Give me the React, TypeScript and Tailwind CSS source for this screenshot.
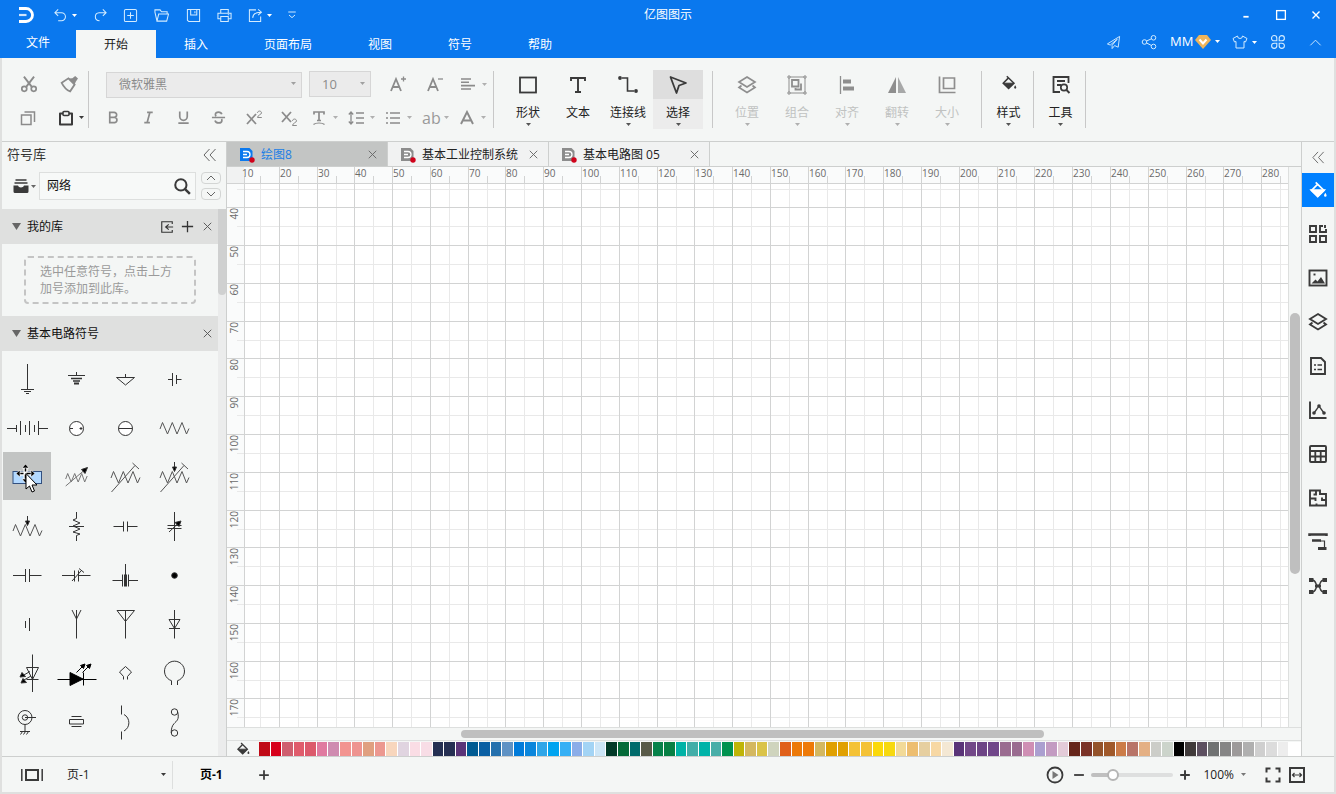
import { useEffect, useRef, useState, type ReactNode } from "react";

const MINOR = 19;
const STEP = 37.78;

const SWATCHES = [
  "#c00a16", "#d7001b", "#cf5f6f", "#e05c6c", "#dc5a6c", "#e07aa0", "#cf8bb0", "#f29490", "#ee9490", "#e0a080",
  "#ec9890", "#f8d6bd", "#e0d4e0", "#fadde5", "#f8dde6", "#252f52", "#252f52", "#5a3478", "#005a92", "#0a5fa3",
  "#2470ad", "#5f92c4", "#007bda", "#0a86dc", "#2fa6e8", "#00a4f0", "#36b0f5", "#8bade8", "#a3d4f5", "#cde6f7",
  "#023a28", "#046a38", "#006b6b", "#585a48", "#07824a", "#078044", "#00b3a6", "#42aea8", "#00b3a8", "#48aea8",
  "#00924f", "#bfb508", "#d4b860", "#dac348", "#cfd4bd", "#e0601a", "#ec7908", "#ee7a08", "#d4b860", "#e0a000",
  "#e0a000", "#f4c236", "#f4c236", "#fbd90a", "#f7d90f", "#f2da98", "#edbe70", "#e6cfa0", "#f7d8a4", "#f4e8d4",
  "#5a3478", "#724888", "#6d4485", "#704689", "#9a6c90", "#9a6c90", "#cf8fb4", "#ab9fd0", "#c39bc2", "#e3cbd8",
  "#65251a", "#7a3226", "#94532a", "#a0592a", "#cc7c48", "#b87468", "#e4b084", "#cccdc8", "#ccd4cb", "#000000",
  "#403a3a", "#5d5060", "#707272", "#858585", "#9d9a9a", "#b0b0b0", "#cfcfcf", "#dcdcdc", "#ededed", "#ffffff",
];

type IconProps = { size?: number; box?: number; sw?: number; className?: string; children: ReactNode };

function Icon({ size = 16, box = 16, sw = 1, className = "", children }: IconProps) {
  return (
    <svg
      width={size}
      height={size}
      viewBox={`0 0 ${box} ${box}`}
      fill="none"
      stroke="currentColor"
      strokeWidth={sw}
      className={`shrink-0 ${className}`}
      aria-hidden="true"
    >
      {children}
    </svg>
  );
}

function Caret({ className = "" }: { className?: string }) {
  return (
    <svg width="5" height="3" viewBox="0 0 5 3" fill="currentColor" className={`shrink-0 ${className}`} aria-hidden="true">
      <path d="M0 0h5L2.5 3z" />
    </svg>
  );
}

/* ---------- shared glyphs ---------- */

const bucket = (
  <>
    <path d="M5.8 1.2 13 8.2 7.6 13.4 2.2 8.2 7 3.4" strokeWidth="1.5" />
    <path d="M2.6 8.2h10L7.6 13.2z" fill="currentColor" />
    <path d="M14.2 10.2c.8 1.2 1.1 1.8 1.1 2.4a1.1 1.1 0 0 1-2.2 0c0-.6.3-1.2 1.1-2.4z" fill="currentColor" stroke="none" />
  </>
);
const layers = "m10 2 8 5-8 5-8-5zM4.500 10.500 2 12.500l8 5 8-5-2.500-2";
const chevronsLeft = <path d="M7.500 2 2 8l5.500 6M13.500 2 8 8l5.500 6" />;
const cross = <path d="m4 4 8 8M12 4l-8 8" />;

/* ---------- title bar ---------- */

const quickActions: { label: string; width: string; caret?: boolean; icon: ReactNode }[] = [
  { label: "撤销", width: "w-[40px]", caret: true, icon: <path d="M5.500 1.500 2 5l3.500 3.500M2 5h7a4.300 4.300 0 0 1 0 8.600H5.500" /> },
  { label: "重做", width: "w-[30px]", icon: <path d="m10.500 1.500 3.500 3.500-3.500 3.500M14 5H6.500a4.300 4.300 0 0 0-4 4.300c0 2.500 1.800 4.200 4.500 4.300" /> },
  { label: "新建", width: "w-[31px]", icon: <><rect x="1.500" y="1.500" width="13" height="13" rx="1.500" /><path d="M8 4.500v7M4.500 8h7" /></> },
  { label: "打开", width: "w-[32px]", icon: <path d="M3.200 14 1 4.500v-2.500h5.500L8 4h6v2.500M3.200 14h10.300l2-7.500H5z" /> },
  { label: "保存", width: "w-[31px]", icon: <><path d="M1.500 1.500h13v13H3l-1.500-1.500z" /><path d="M5 1.500v6h6.500v-6M9.500 3.500v2" /></> },
  { label: "打印", width: "w-[31px]", icon: <><path d="M4 5.500v-4h8v4M4 11.500H1v-6h14v6h-3" /><path d="M4 9h8v5.500H4zM11.500 7.300h1.500" /></> },
  { label: "导出", width: "w-[38px]", caret: true, icon: <><path d="M8.500 2H1.500v12.500h12V9" /><path d="M5 10.500c.3-4 3-6 8.500-6M10.800 1.500l3.500 3-3.500 3.200" /></> },
];

const menuTabs = ["开始", "插入", "页面布局", "视图", "符号", "帮助"];

function Header() {
  const [active, setActive] = useState("开始");
  return (
    <header className="bg-[#0a78ee] text-white">
      <div className="grid grid-cols-[1fr_auto_1fr] h-[30px] items-center">
        <div className="flex items-center pl-[18px]">
          <svg width="16" height="16" viewBox="0 0 16 16" fill="none" stroke="white" className="mr-[19px] shrink-0" aria-hidden="true">
            <path d="M1 1.500h7a6.500 6.500 0 0 1 0 13H1" strokeWidth="2.800" />
            <path d="M1 8h7.500" strokeWidth="2.200" opacity=".8" />
          </svg>
          {quickActions.map((a) => (
            <button key={a.label} aria-label={a.label} className={`flex items-center gap-1 shrink-0 text-[#d4ecff] ${a.width}`}>
              <Icon size={15} sw={1.1}>{a.icon}</Icon>
              {a.caret && <Caret className="text-white" />}
            </button>
          ))}
          <button aria-label="更多" className="text-[#d4ecff]">
            <Icon size={12} sw={1.3}><path d="M3 4h10M4 8l4 3.500L12 8" /></Icon>
          </button>
        </div>
        <h1 className="text-xs">亿图图示</h1>
        <div className="flex justify-end pr-[3px]">
          <button aria-label="最小化" className="w-[35px] flex justify-center"><Icon size={14} sw={2}><path d="M5 10h6" /></Icon></button>
          <button aria-label="最大化" className="w-[35px] flex justify-center"><Icon size={14} sw={1.5}><rect x="3" y="3" width="10" height="10" /></Icon></button>
          <button aria-label="关闭" className="w-[35px] flex justify-center"><Icon size={14} sw={1.6}>{cross}</Icon></button>
        </div>
      </div>
      <div className="flex h-[28px] text-xs">
        <button className="w-[76px] pb-[2px]">文件</button>
        <nav className="flex">
          {menuTabs.map((t) => (
            <button
              key={t}
              onClick={() => setActive(t)}
              className={t === active ? "px-7 pt-[2px] bg-[#f4f6f5] text-[#222]" : "px-7 pt-[2px]"}
            >
              {t}
            </button>
          ))}
        </nav>
        <div className="ml-auto flex items-center pb-1 pr-[3px] text-[#d4ecff]">
          <button aria-label="发送" className="w-[35px] flex justify-center">
            <Icon size={15}><path d="M1.500 9.500 14.500 1.500l-1.500 11.500-4-1.800M1.500 9.500l3 1.200L12 4.500 6.500 11v3.500l2.500-3" /></Icon>
          </button>
          <button aria-label="分享" className="w-[35px] flex justify-center">
            <Icon size={16}>
              <circle cx="3.500" cy="8" r="2.300" /><circle cx="12.500" cy="3.800" r="2.300" /><circle cx="12.500" cy="12.500" r="2.300" />
              <path d="m5.600 7 4.800-2.200M5.600 9l4.900 2.500" />
            </Icon>
          </button>
          <button className="w-[60px] flex items-center pl-1 text-white text-[13px]">
            MM
            <svg width="16" height="14" viewBox="0 0 16 14" className="ml-[2px] shrink-0" aria-hidden="true">
              <path d="M4 0h8l4 5-8 9-8-9z" fill="#eeb55c" />
              <path d="m4.500 4.500 3.500 4 3.500-4" stroke="#fff" strokeWidth="2" fill="none" />
            </svg>
            <Caret className="ml-1" />
          </button>
          <button aria-label="主题" className="w-[31px] flex items-center justify-end gap-1">
            <Icon size={16}><path d="M5.500 2 1 4.500l1.500 3.500L4 7.500v6.500h8V7.500l1.500.5L15 4.500 10.500 2a2.500 2.500 0 0 1-5 0z" /></Icon>
            <Caret className="text-white" />
          </button>
          <button aria-label="应用" className="w-[41px] flex justify-center">
            <Icon size={16} sw={1.100}>
              <path d="M1.500 4.200A2.600 2.600 0 1 1 6.800 4.200V6.800H4.200A2.600 2.600 0 0 1 1.500 4.200zM9.200 6.800V4.200a2.600 2.600 0 1 1 2.600 2.600zM6.800 9.200v2.600a2.600 2.600 0 1 1-2.600-2.600zM9.200 9.200h2.600a2.600 2.600 0 1 1-2.600 2.600z" />
            </Icon>
          </button>
          <button aria-label="收起功能区" className="w-[35px] flex justify-center"><Icon size={15}><path d="m2.500 11 5.500-5.500L13.500 11" /></Icon></button>
        </div>
      </div>
    </header>
  );
}

/* ---------- ribbon ---------- */

function Divider() {
  return <div className="w-px h-[57px] bg-[#c8c8c8]" />;
}

const textButtons: { label: string; icon: ReactNode }[] = [
  { label: "加粗", icon: <path d="M4 2.500h4.700a2.600 2.600 0 0 1 0 5.300H4zM4 7.800h5.300a2.900 2.900 0 0 1 0 5.700H4z" /> },
  { label: "斜体", icon: <path d="M6.500 2.500h6M3.500 13.500h6M9.500 2.500l-3 11" /> },
  { label: "下划线", icon: <path d="M4 1.500v5.500a4 4 0 0 0 8 0V1.500M2.500 14h11" /> },
  { label: "删除线", icon: <path d="M11.500 4.500C11 2.800 9.700 2.200 8 2.200c-2 0-3.300 1-3.300 2.500 0 .8.300 1.400.9 1.800M1 8h14M4.300 11.200c.4 1.800 1.900 2.600 3.800 2.600 2.200 0 3.500-1 3.500-2.700 0-.6-.1-1-.4-1.400" /> },
];

const dropButtons: { label: string; icon: ReactNode }[] = [
  { label: "字符间距", icon: <><path d="M3 4.500V2h10v2.500M8 2v8.500M6 10.500h4" /><path d="M2.500 14.500c2-2 9-2 11 0" strokeWidth="1.200" /></> },
  { label: "行距", icon: <><path d="M8 3h8M8 8h8M8 13h8" /><path d="M3 2v12M.8 4.500 3 2l2.200 2.500M.8 11.500 3 14l2.200-2.500" strokeWidth="1.300" /></> },
  { label: "列表", icon: <path d="M1 3h2M1 8h2M1 13h2M5 3h10M5 8h10M5 13h10" /> },
];

const bigTools: { label: string; caret: boolean; icon: ReactNode }[] = [
  { label: "形状", caret: true, icon: <rect x="2" y="2.500" width="16" height="15" strokeWidth="1.800" /> },
  { label: "文本", caret: false, icon: <path d="M3 6V3h14v3M10 3v14M7 17h6" strokeWidth="1.900" /> },
  { label: "连接线", caret: true, icon: <><path d="M4 3h5.500v13H16" strokeWidth="1.600" /><circle cx="2" cy="3" r="1.900" fill="currentColor" stroke="none" /><circle cx="18" cy="16" r="1.900" fill="currentColor" stroke="none" /></> },
  { label: "选择", caret: true, icon: <path d="m2.500 2 15.500 6-7 2.500L8.500 18z" strokeWidth="1.800" strokeLinejoin="round" /> },
];

const arrangeTools: { label: string; icon: ReactNode }[] = [
  { label: "位置", icon: <path d={layers} strokeWidth="1.700" /> },
  {
    label: "组合",
    icon: (
      <>
        <rect x="2" y="2" width="16" height="16" strokeWidth="1" />
        <path d="M1 1h2v2H1zM17 1h2v2h-2zM1 17h2v2H1zM17 17h2v2h-2z" fill="#f4f6f5" strokeWidth="1" />
        <path d="M5 5h6.500v6.500H5zM14 8.500v6H8.500V13" strokeWidth="1.800" />
      </>
    ),
  },
  { label: "对齐", icon: <><path d="M3.500 1v18" strokeWidth="1.300" /><path d="M6 4.500h8v4H6zM6 11.500h11v4H6z" fill="currentColor" stroke="none" /></> },
  { label: "翻转", icon: <><path d="M9 2v16H1z" fill="currentColor" stroke="none" /><path d="M11 2v16h8z" fill="currentColor" stroke="none" opacity=".75" /></> },
  { label: "大小", icon: <path d="M2.500 1.500v16h16M6.500 3h11v10.500h-11z" strokeWidth="1.700" /> },
];

function BigTool({ label, icon, caret, active, disabled }: { label: string; icon: ReactNode; caret: boolean; active?: boolean; disabled?: boolean }) {
  return (
    <button disabled={disabled} className={`w-[50px] h-[59px] flex flex-col items-center ${active ? "bg-[#ececec]" : ""}`}>
      <span className={`w-full h-[29px] flex items-center justify-center ${active ? "bg-[#dedede]" : ""} ${disabled ? "text-[#8e8e8e]" : "text-[#3a3a3a]"}`}>
        <Icon size={20} box={20}>{icon}</Icon>
      </span>
      <span className={`text-xs pt-1 leading-5 ${disabled ? "text-[#c0c2c1]" : "text-[#222]"}`}>{label}</span>
      {caret && <Caret className={disabled ? "text-[#b0b0b0]" : "text-[#555]"} />}
    </button>
  );
}

function Ribbon() {
  return (
    <section aria-label="开始" className="flex items-center h-[84px] border-b border-[#cdcfce] text-[#8b8b8b]">
      <div className="grid grid-cols-[46px_40px] grid-rows-2 h-[70px] pt-[2px] items-center">
        <button aria-label="剪切" className="pl-[18px]">
          <Icon size={18}>
            <path d="m3.500 1.500 7 9M12.500 1.500l-7 9" strokeWidth="1.700" />
            <circle cx="3.800" cy="12.300" r="2.200" strokeWidth="1.500" /><circle cx="12.200" cy="12.300" r="2.200" strokeWidth="1.500" />
          </Icon>
        </button>
        <button aria-label="格式刷" className="pl-[12px]">
          <Icon size={18}>
            <path d="M7.500 3 13 8.500 9 14.500C6 13.500 3.500 11 1.500 7z" strokeWidth="1.600" />
            <path d="m7.500 3 5.500 5.500 1-2.500L16 3 13.500.8 11 2.800z" fill="currentColor" stroke="none" />
          </Icon>
        </button>
        <button aria-label="复制" className="pl-[18px]">
          <Icon size={16}><path d="M1.500 5h9.500v9.500H1.500zM4.500 2h10v10" strokeWidth="1.500" /></Icon>
        </button>
        <button aria-label="粘贴" className="pl-[10px] flex items-center gap-[5px] text-[#3a3a3a]">
          <Icon size={16}><path d="M2 3.500h12v11H2z" strokeWidth="2" strokeLinejoin="round" /><rect x="5" y="1.500" width="6" height="4" rx="1" fill="#f4f6f5" strokeWidth="1.600" /></Icon>
          <Caret />
        </button>
      </div>
      <Divider />
      <div className="flex flex-col justify-center gap-[7px] w-[404px] pl-[7px] pt-[2px]">
        <div className="flex items-center">
          <div className="relative ml-[10px]">
            <select aria-label="字体" className="appearance-none w-[196px] h-[26px] border border-[#d6d6d6] bg-[#ebebeb] text-xs pl-3 text-[#8b8b8b]">
              <option>微软雅黑</option>
            </select>
            <Caret className="absolute right-[6px] top-[11px] text-[#a0a0a0]" />
          </div>
          <div className="relative ml-[7px]">
            <select aria-label="字号" className="appearance-none w-[62px] h-[26px] border border-[#d6d6d6] bg-[#ebebeb] text-[13px] pl-3 text-[#8b8b8b]">
              <option>10</option>
            </select>
            <Caret className="absolute right-[6px] top-[11px] text-[#a0a0a0]" />
          </div>
          <button aria-label="增大字号" className="w-[36px] ml-[9px] flex justify-center">
            <Icon size={18} box={18} sw={1.800}><path d="m2 16 5-12 5 12M3.800 12h6.400" /><path d="M12 4h5M14.500 1.500v5" strokeWidth="1.300" /></Icon>
          </button>
          <button aria-label="减小字号" className="w-[37px] flex justify-center">
            <Icon size={18} box={18} sw={1.800}><path d="m2 16 5-12 5 12M3.800 12h6.400" /><path d="M12 4h5" strokeWidth="1.300" /></Icon>
          </button>
          <button aria-label="段落对齐" className="w-[37px] ml-[3px] pl-1 flex items-center gap-[6px]">
            <Icon size={16} sw={1.600}><path d="M1 3h10M1 6.300h8M1 9.600h14M1 13h10" /></Icon>
            <Caret className="text-[#b0b0b0]" />
          </button>
        </div>
        <div className="flex items-center h-[26px]">
          {textButtons.map((b) => (
            <button key={b.label} aria-label={b.label} className="w-[35px] flex justify-center">
              <Icon size={15} sw={1.800}>{b.icon}</Icon>
            </button>
          ))}
          <button aria-label="上标" className="w-[35px] flex justify-center">
            <Icon size={18} box={18} sw={1.800}><path d="m2 5 9 10M11 5 2 15" /><path d="M12.500 4c0-2.600 4-2.600 4 0 0 1.500-4 2.200-4 4.500h4.300" strokeWidth="1" /></Icon>
          </button>
          <button aria-label="下标" className="w-[36px] flex justify-center">
            <Icon size={18} box={18} sw={1.800}><path d="m2 3 9 10M11 3 2 13" /><path d="M12.500 12c0-2.600 4-2.600 4 0 0 1.500-4 2.200-4 4.500h4.300" strokeWidth="1" /></Icon>
          </button>
          {dropButtons.map((b) => (
            <button key={b.label} aria-label={b.label} className="w-[37px] pl-1 flex items-center gap-[6px]">
              <Icon size={16} sw={1.700}>{b.icon}</Icon>
              <Caret className="text-[#b0b0b0]" />
            </button>
          ))}
          <button className="w-[37px] pl-[4px] flex items-center gap-[3px] text-base leading-5 text-[#9a9a9a]">
            ab
            <Caret className="text-[#b0b0b0]" />
          </button>
          <button aria-label="字体颜色" className="w-[37px] pl-1 flex items-center gap-[6px]">
            <Icon size={16} sw={1.900}><path d="M2 14 8 2l6 12M4.500 10.500h7" /></Icon>
            <Caret className="text-[#b0b0b0]" />
          </button>
        </div>
      </div>
      <Divider />
      <div className="flex px-[9px]">
        {bigTools.map((t) => (
          <BigTool key={t.label} {...t} active={t.label === "选择"} />
        ))}
      </div>
      <Divider />
      <div className="flex px-[9px]">
        {arrangeTools.map((t) => (
          <BigTool key={t.label} {...t} caret disabled />
        ))}
      </div>
      <Divider />
      <div className="flex w-[51px] pl-[2px]">
        <BigTool label="样式" caret icon={<g transform="translate(2 0)">{bucket}</g>} />
      </div>
      <Divider />
      <div className="flex w-[51px] pl-[2px]">
        <BigTool
          label="工具"
          caret
          icon={<><path d="M17.500 8V2h-15v15H9M6 6h8M6 10h4" strokeWidth="1.800" /><circle cx="13" cy="12.500" r="3.200" strokeWidth="1.700" /><path d="m15.500 15 3 3" strokeWidth="2" /></>}
        />
      </div>
      <Divider />
    </section>
  );
}

/* ---------- symbol library ---------- */

const zigzag = "M10 26l2.500-6.500 5 11.500 4.800-11.500L27 31l5-11.500L36.500 31l2.500-5.500";

const symbols: { name: string; art: ReactNode }[] = [
  { name: "接地", art: <path d="M24.500 10v25M18 35.500h13M21 37.500h7M23 39.500h3" /> },
  { name: "接地2", art: <><path d="M24.500 18v3M16 21.500h17" /><path d="M19 24.500h11" strokeWidth="1.500" /><path d="M21 27h7" strokeWidth="1.500" /><path d="M22 29.500h5" strokeWidth="2" /></> },
  { name: "信号地", art: <path d="M24.500 20v3.500M15.500 23.500h18l-9 7.500z" /> },
  { name: "电池", art: <path d="M18 25.500h4.500M22.500 19v13M26.500 21v9M26.500 25.500h5" /> },
  { name: "电池组", art: <><path d="M4 25.500h9M17.500 18v14M26.500 18v14M35.500 18v14M35.500 25.500H45" /><path d="M13.500 22v7M22.500 22v7M31.500 22v7" /></> },
  { name: "直流源", art: <><circle cx="24.500" cy="25.500" r="7" fill="#fff" /><path d="M18 25.500h3M27.500 25.500h3M29 24v3" /></> },
  { name: "理想源", art: <><circle cx="24.500" cy="25.500" r="7" fill="#fff" /><path d="M17.500 25.500h14" /></> },
  { name: "电阻", art: <path d={zigzag} stroke="#555" /> },
  {
    name: "电阻器",
    art: (
      <>
        <rect x="10" y="19.500" width="28.500" height="12" fill="#b3d9ff" stroke="#33507f" />
        <path d="M22.500 14v14M15 21.500h15" stroke="#fff" strokeWidth="4" />
        <path d="M22.500 14v14M15 21.500h15" stroke="#000" strokeWidth="1.500" strokeDasharray="5.500 3 5.500" />
        <path d="m22.500 12 3.500 4h-7zM13 21.500l4-3.500v7zM32 21.500l-4-3.500v7zM22.500 31l3.500-4h-7z" fill="#000" stroke="#fff" strokeWidth=".6" />
        <path d="M23 21.500V37l3.500-3 2.500 6 2.500-1-2.500-6h5z" fill="#fff" stroke="#000" />
      </>
    ),
  },
  { name: "可变电阻", art: <><path d="M13.700 27l2-5.500 3.500 8.500 3.500-8.500 3.500 8.500 3.500-8.500 3 8.500 2.500-6M13.700 34 32 18.500" stroke="#777" /><path d="m35.500 15.500-6 2 3.500 4z" fill="#000" /></> },
  { name: "预调电阻", art: <path d={`${zigzag}M10.500 40 34 13.500M31.500 11l6.500 6`} stroke="#555" /> },
  { name: "可调电阻", art: <><path d={`${zigzag}M10.500 40 34 13.500M31.500 11l6.500 6`} stroke="#555" /><path d="M24.500 10v8" /><path d="m24.500 19.500-2-4.500h4z" fill="#000" /></> },
  { name: "电位器", art: <><g transform="translate(0 4)" stroke="#555"><path d={zigzag} /></g><path d="M24.500 15v8" /><path d="m24.500 24.500-2-4.500h4z" fill="#000" /></> },
  { name: "衰减器", art: <path d="M24.500 11v6.500l-3.500 1.500 7 3-7 3 7 3-7 3 7 2-3.500 1.500V40M17 25.500h15" /> },
  { name: "电容", art: <path d="M12.500 25.500h10M22.500 20.500v10M26.500 20.500v10M26.500 25.500h10" /> },
  { name: "可变电容", art: <><path d="M24.500 11v29M17.500 24.500h14M17.500 27.500h14M19 31l9-8.500" /><path d="m31 20-6 1.500 4 4z" fill="#000" /></> },
  { name: "电容2", art: <path d="M10 25.500h12.500M22.500 19v13M26.500 19v13M26.500 25.500h12" /> },
  { name: "微调电容", art: <path d="M10 25.500h12.500M22.500 20.500v11M26.500 20.500v11M26.500 25.500h12M20 31l9-10M27 18.500l5 4" /> },
  { name: "穿心电容", art: <><path d="M24.500 14v11M11.500 30.500h10M21.500 24.500v12M27.500 24.500v12M27.500 30.500H37" /><path d="M24.500 24.500v12" strokeWidth="3" /></> },
  { name: "节点", art: <circle cx="24.500" cy="25.500" r="2.800" fill="#000" /> },
  { name: "单元", art: <path d="M22.500 22v7M26.500 19v13" /> },
  { name: "天线", art: <path d="M24.500 11v28.500M20 11l4.500 9 4.500-9" /> },
  { name: "天线2", art: <path d="M24.500 11.500v28M16 11.500h17.500l-9 11z" /> },
  { name: "二极管", art: <path d="M24.500 11v28.500M19 20.500h11l-5.500 9zM19 29.500h11" /> },
  { name: "光电二极管", art: <><path d="M29.500 6.500v37.500M23.500 19.500h12l-6 12zM23.500 31.500h12M27 23.500l-7 4M28 28l-7 4" /><path d="m17 29 2-4.500 3.500 4zM18 35l2-4.500 3.500 4z" fill="#000" /></> },
  { name: "发光二极管", art: <g stroke="#000"><path d="M5.500 31.500H44.500M24.500 24.500l7-7M30.500 24.500l7-7M31.500 24.500v13" /><path d="M18 24.500v13l13-6.500z" fill="#000" /><path d="m33 16-4.500 1.500 3 3zM39 16l-4.500 1.500 3 3z" fill="#000" /></g> },
  { name: "灯", art: <path d="M22.500 31.500v-3l-4-4.500 6-5.500 6 5.500-4 4.500v3" /> },
  { name: "环形", art: <path d="M21.500 37v-4.300a10 10 0 1 1 6 0V37" /> },
  { name: "同轴", art: <><circle cx="22" cy="20.500" r="7" /><circle cx="22" cy="20.500" r="2.700" /><path d="M22 20.500h11M22 27.500v7M17 34.500h10M19.500 34.500l-2 3M22.500 34.500l-2 3M25.500 34.500l-2 3" /></> },
  { name: "晶体", art: <path d="M17.500 22.500h14v4.500h-14zM19.500 19.500h10M19.500 29.500h10" /> },
  { name: "断路器", art: <path d="M20.500 8.500v9M23 17.500c6.500 3.500 6.500 13 0 16.500M20.500 34.500v8" /> },
  { name: "熔断器", art: <><circle cx="24.500" cy="15" r="3.200" /><circle cx="24.500" cy="36" r="3.200" /><path d="M27.700 15c2 8-1.500 9-3.500 11.500-2 2-3 5-3 9.500" /></> },
];

function SectionHeader({ title, children }: { title: string; children?: ReactNode }) {
  return (
    <div className="flex items-center h-[35px] bg-[#dfe0df] pl-[10px] pr-[2px] text-[#555]">
      <svg width="9" height="7" viewBox="0 0 9 7" fill="#666" aria-hidden="true"><path d="M0 0h9L4.500 7z" /></svg>
      <h3 className="ml-[6px] mr-auto text-xs text-[#111]">{title}</h3>
      {children}
      <button aria-label={`关闭${title}`} className="w-4"><Icon size={15}>{cross}</Icon></button>
    </div>
  );
}

function Library() {
  const [query, setQuery] = useState("网络");
  const [selected, setSelected] = useState("电阻器");
  return (
    <aside className="w-[225px] shrink-0 flex flex-col border-r border-[#cdcfce]">
      <div className="flex items-center justify-between h-[25px] pl-[5px] pr-[8px]">
        <h2 className="text-[13px] text-[#333]">符号库</h2>
        <button aria-label="收起" className="text-[#666]"><Icon size={16}>{chevronsLeft}</Icon></button>
      </div>
      <div className="flex items-center h-[42px] pl-[11px] pb-[4px]">
        <button aria-label="打开符号库" className="flex items-center gap-[2px] w-[26px] text-[#3a3a3a]">
          <Icon size={16}>
            <path d="M2.500 2h11M1.500 5h13" strokeWidth="1.600" />
            <path d="M.5 7.500h4.500c.5 2.500 5.500 2.500 6 0h4.500v6a1.500 1.500 0 0 1-1.500 1.500H2a1.500 1.500 0 0 1-1.500-1.500z" fill="currentColor" stroke="none" />
          </Icon>
          <Caret className="text-[#666]" />
        </button>
        <div className="flex items-center w-[157px] h-[28px] border border-[#dddfde] bg-[#f7f9f8]">
          <input aria-label="搜索符号" value={query} onChange={(e) => setQuery(e.target.value)} className="w-[133px] pl-[7px] text-xs text-[#111] outline-none" />
          <button aria-label="搜索" className="text-[#3a3a3a]"><Icon size={18} sw={1.800}><circle cx="7" cy="7" r="5" /><path d="m10.500 10.500 4.500 4.500" strokeWidth="2.200" /></Icon></button>
        </div>
        <div className="flex flex-col gap-1 ml-[5px]">
          <button aria-label="上一个" className="w-[20px] h-[12px] border border-[#d3d5d4] rounded flex items-center justify-center text-[#666]"><Icon size={10} box={10}><path d="m1 7 4-4 4 4" /></Icon></button>
          <button aria-label="下一个" className="w-[20px] h-[12px] border border-[#d3d5d4] rounded flex items-center justify-center text-[#666]"><Icon size={10} box={10}><path d="m1 3 4 4 4-4" /></Icon></button>
        </div>
      </div>
      <div className="flex flex-1 min-h-0 overflow-hidden">
        <div className="w-[216px]">
          <SectionHeader title="我的库">
            <button aria-label="导入" className="w-5 text-[#333]"><Icon size={14}><path d="M14 4.500V2H2v12h12v-2.500M15 8H7M10 5 6.500 8l3.500 3" strokeWidth="1.300" /></Icon></button>
            <button aria-label="添加" className="w-5 text-[#333]"><Icon size={15} sw={1.400}><path d="M8 2v12M2 8h12" /></Icon></button>
          </SectionHeader>
          <div className="h-[72px] pt-3 pl-[22px]">
            <p className="w-[172px] h-[48px] pl-[14px] pt-[5px] border-2 border-dashed border-[#c4c4c4] rounded text-xs leading-[17px] text-[#9a9a9a]">
              选中任意符号，点击上方
              <br />
              加号添加到此库。
            </p>
          </div>
          <SectionHeader title="基本电路符号" />
          <div className="grid grid-cols-[repeat(4,48px)] gap-px pl-px pt-[3px]">
            {symbols.map((s) => (
              <button
                key={s.name}
                aria-label={s.name}
                onClick={() => setSelected(s.name)}
                className={s.name === selected ? "size-12 bg-[#c2c4c3]" : "size-12"}
              >
                <svg width="48" height="48" viewBox="0 0 48 48" fill="none" stroke="#333" aria-hidden="true">{s.art}</svg>
              </button>
            ))}
          </div>
        </div>
        <div className="w-2 bg-[#ebecec]">
          <div className="h-[86px] bg-[#cfd0d0] rounded-b" />
        </div>
      </div>
    </aside>
  );
}

/* ---------- drawing area ---------- */

const docs = [
  { name: "绘图8", active: true },
  { name: "基本工业控制系统", active: false },
  { name: "基本电路图 05", active: false },
];

function DocTabs() {
  return (
    <div className="flex h-[25px] border-b border-[#cdcfce]">
      {docs.map((d) => (
        <div
          key={d.name}
          className={`flex items-center w-[161px] pt-px pl-[13px] pr-[7px] border-r border-[#cdcfce] text-xs ${d.active ? "bg-[#c3c5c4] text-[#1a7ee6]" : "bg-[#f1f2f2] text-[#222]"}`}
        >
          <svg width="15" height="16" viewBox="0 0 15 16" fill="none" className="shrink-0" aria-hidden="true">
            <path d="M0 1h9.500l3 3v10H0z" fill={d.active ? "#0a78ee" : "#8c8c8c"} />
            <path d="M3 4.500h4a3 3 0 0 1 0 6H3M3 7.500h4" stroke="#fff" strokeWidth="1.300" />
            <circle cx="12" cy="13" r="2.700" fill="#d0021b" />
          </svg>
          <button className="ml-[6px] mr-auto whitespace-nowrap">{d.name}</button>
          <button aria-label={`关闭${d.name}`} className="text-[#666]"><Icon size={15}>{cross}</Icon></button>
        </div>
      ))}
    </div>
  );
}

function marks(first: number, origin: number, length: number) {
  const count = Math.max(0, Math.ceil((length - origin) / STEP));
  return Array.from({ length: count }, (_, i) => ({ value: first + i * 10, pos: Math.floor(origin + i * STEP) }));
}

// page grid with its horizontal and vertical rulers, 10 mm per major line
function Sheet() {
  const ref = useRef<HTMLDivElement>(null);
  const [size, setSize] = useState({ width: 0, height: 0 });

  useEffect(() => {
    if (!ref.current) return;
    const observer = new ResizeObserver(([entry]) => {
      setSize({ width: entry.contentRect.width, height: entry.contentRect.height });
    });
    observer.observe(ref.current);
    return () => observer.disconnect();
  }, []);

  const { width, height } = size;
  const columns = marks(10, 14.5, width);
  const rows = marks(30, 3.05, height);

  return (
    <div ref={ref} className="flex-1 min-w-0 min-h-0 overflow-hidden bg-white">
      <svg width={width} height={height} className="block overflow-visible" fontSize="10" fill="#6a6a6a" shapeRendering="crispEdges">
        <rect width={width} height="16" fill="#fafbfb" />
        <rect width="17" height={height} fill="#fafbfb" />
        <rect width="17" height="16" fill="#f1f2f2" />
        <g stroke="#e9e9e9">
          {columns.map((c) => (
            <line key={c.value} x1={c.pos + MINOR + 0.5} x2={c.pos + MINOR + 0.5} y1="17" y2={height} />
          ))}
          {rows.map((r) => (
            <line key={r.value} x1="10" x2={width} y1={r.pos + MINOR + 0.5} y2={r.pos + MINOR + 0.5} />
          ))}
        </g>
        <g stroke="#d2d3d3">
          {columns.slice(1).map((c) => (
            <line key={c.value} x1={c.pos + 0.5} x2={c.pos + 0.5} y1="0" y2={height} />
          ))}
          {columns.map((c) => (
            <line key={c.value} x1={c.pos + MINOR + 0.5} x2={c.pos + MINOR + 0.5} y1="9" y2="16" />
          ))}
          {rows.slice(1).map((r) => (
            <line key={r.value} x1="0" x2={width} y1={r.pos + 0.5} y2={r.pos + 0.5} />
          ))}
          <line x1="0" x2={width} y1="16.500" y2="16.500" />
          <line x1="17.500" x2="17.500" y1="9" y2={height} />
        </g>
        {columns.map((c) => (
          <text key={c.value} x={c.pos + 1} y="10">{c.value}</text>
        ))}
        {rows.slice(1).map((r) => (
          <text key={r.value} transform={`translate(11 ${r.pos + 1}) rotate(-90)`} textAnchor="end">{r.value}</text>
        ))}
      </svg>
    </div>
  );
}

function Palette() {
  return (
    <div className="flex items-center h-[16px] pl-[9px] border-t border-[#dddfde]">
      <button aria-label="填充颜色" className="w-[23px] text-[#3a3a3a]"><Icon size={14}>{bucket}</Icon></button>
      <div className="flex flex-1 h-[14px] bg-white">
        {SWATCHES.map((c, i) => (
          <button key={i} aria-label={c} className="flex-1 min-w-0 border-r border-white" style={{ backgroundColor: c }} />
        ))}
      </div>
    </div>
  );
}

/* ---------- right rail ---------- */

const panels: { label: string; icon: ReactNode }[] = [
  { label: "样式", icon: <g transform="translate(1 1) scale(1.150)">{bucket}</g> },
  { label: "布局", icon: <path d="M2 2h6v6H2zM2 12h6v6H2zM12 12h6v6h-6zM15 2h-3v6h6V5M17 1v3" /> },
  { label: "图片", icon: <><rect x="1.500" y="2.500" width="17" height="15" /><path d="m3.500 15.500 4-4 2 2 3.500-4.500 4 6.500z" fill="currentColor" stroke="none" /><path d="M5.500 6.500h2" /></> },
  { label: "图层", icon: <path d={layers} /> },
  { label: "页面", icon: <><path d="M3 2h10l4 4v12H3z" /><path d="M6 9h2M9.500 9H14M6 13.500h2M9.500 13.500H14" strokeWidth="1.600" /></> },
  { label: "图表", icon: <><path d="M2 1.500V18h16.500" /><path d="m6 13 5-7 5 7" strokeWidth="1.300" /><circle cx="6" cy="13" r="1.800" fill="currentColor" stroke="none" /><circle cx="11" cy="6" r="1.800" fill="currentColor" stroke="none" /><circle cx="16" cy="13" r="1.800" fill="currentColor" stroke="none" /></> },
  { label: "表格", icon: <><rect x="2" y="2" width="16" height="16" rx="1" /><path d="M2 7h16M2 12.500h16M7.300 7v11M12.700 7v11" strokeWidth="1.800" /></> },
  { label: "平面图", icon: <path d="M2 2.500h10V6h6v11.500H2zM2 10.500h5.500v2.500M8 2.500v4H5.500M18 12h-4V9.500M8.500 17.500v-2" /> },
  { label: "时间线", icon: <><path d="M1.500 4V2.500h17V4M4 8.500h9" strokeWidth="2.500" /><path d="M12 9h4.500v7" strokeWidth="1.200" /><path d="M10 16.500h8.500" strokeWidth="3" /></> },
  { label: "思维导图", icon: <><path d="M4 4c5 0 3 6 6 6s1-6 6-6M4 16c5 0 3-6 6-6s1 6 6 6" strokeWidth="1.400" /><path d="M1 4h4.500M14.500 4H19M1 16h4.500M14.500 16H19" strokeWidth="4" /><path d="M7 10h6" strokeWidth="3" /></> },
];

function PanelRail() {
  const [open, setOpen] = useState("样式");
  return (
    <aside className="w-[33px] shrink-0 flex flex-col items-stretch border-l border-[#cdcfce]">
      <button aria-label="展开" className="h-[31px] flex items-center justify-center text-[#666]"><Icon size={15}>{chevronsLeft}</Icon></button>
      <div className="flex flex-col gap-[10px]">
        {panels.map((p) => (
          <button
            key={p.label}
            aria-label={p.label}
            onClick={() => setOpen(p.label)}
            className={`h-[34px] flex items-center justify-center ${p.label === open ? "bg-[#0080ff] text-white" : "text-[#3a3a3a]"}`}
          >
            <Icon size={20} box={20} sw={1.900}>{p.icon}</Icon>
          </button>
        ))}
      </div>
    </aside>
  );
}

/* ---------- status bar ---------- */

function StatusBar() {
  const [zoom, setZoom] = useState(22);
  return (
    <footer className="flex items-center h-[36px] border-t border-[#cdcfce] text-[#3a3a3a]">
      <button aria-label="页面视图" className="ml-[19px]">
        <svg width="22" height="14" viewBox="0 0 22 14" fill="none" stroke="currentColor" aria-hidden="true">
          <path d="M.8 1v12M21.200 1v12" strokeWidth="1.500" /><rect x="5" y="2" width="12" height="10" strokeWidth="2" />
        </svg>
      </button>
      <div className="relative ml-[24px] w-[106px] border-r border-[#dddfde]">
        <select aria-label="页面" className="appearance-none w-[100px] h-[28px] text-xs text-[#222]">
          <option>页-1</option>
        </select>
        <Caret className="absolute right-[6px] top-[12px]" />
      </div>
      <button className="ml-[27px] text-xs font-bold text-black">页-1</button>
      <button aria-label="添加页面" className="ml-[34px]"><Icon size={14} sw={2}><path d="M8 2.500v11M2.500 8h11" /></Icon></button>
      <div className="ml-auto flex items-center pr-[29px]">
        <button aria-label="放映" className="mr-[9px]"><Icon size={18} box={18}><circle cx="9" cy="9" r="7.500" strokeWidth="1.800" /><path d="m6.500 5 6 4-6 4z" fill="#777" stroke="none" /></Icon></button>
        <button aria-label="缩小" className="mr-[6px]"><Icon size={12} sw={2.400}><path d="M1.500 8h13" /></Icon></button>
        <input
          type="range"
          aria-label="缩放"
          value={zoom}
          onChange={(e) => setZoom(Number(e.target.value))}
          className="appearance-none w-[82px] h-1 rounded bg-[linear-gradient(90deg,#bfbfbf_26%,#dedfdf_26%)] [&::-webkit-slider-thumb]:appearance-none [&::-webkit-slider-thumb]:size-3 [&::-webkit-slider-thumb]:rounded-full [&::-webkit-slider-thumb]:bg-white [&::-webkit-slider-thumb]:border-2 [&::-webkit-slider-thumb]:border-[#b5b5b5]"
        />
        <button aria-label="放大" className="ml-[5px]"><Icon size={14} sw={2.200}><path d="M8 2.500v11M2.500 8h11" /></Icon></button>
        <button className="ml-[11px] flex items-center gap-[7px] text-xs text-[#222]">
          100%
          <Caret className="text-[#777]" />
        </button>
        <button aria-label="全屏" className="ml-[19px]"><Icon size={16} sw={2}><path d="M1.500 5.500v-4h4M10.500 1.500h4v4M14.500 10.500v4h-4M5.500 14.500h-4v-4" /></Icon></button>
        <button aria-label="适应宽度" className="ml-[8px]"><Icon size={16}><rect x="1" y="1" width="14" height="14" strokeWidth="2" /><path d="M4 8h8M5.500 6 3.500 8l2 2M10.500 6l2 2-2 2" strokeWidth="1.200" /></Icon></button>
      </div>
    </footer>
  );
}

export default function App() {
  return (
    <div className="h-screen flex flex-col overflow-hidden bg-[#f4f6f5] font-['Open_Sans','Noto_Sans_CJK_SC',sans-serif]">
      <Header />
      <div className="flex-1 min-h-0 flex flex-col border-x-2 border-b-2 border-[#dfe0df]">
        <Ribbon />
        <main className="flex flex-1 min-h-0">
          <Library />
          <section className="flex-1 min-w-0 flex flex-col">
            <DocTabs />
            <div className="flex flex-1 min-h-0">
              <Sheet />
              <div className="w-[13px] flex flex-col px-px border-l border-[#dddfde]">
                <div className="flex-[147]" />
                <div className="flex-[261] rounded-full bg-[#bfbfbf]" />
                <div className="flex-[154]" />
              </div>
            </div>
            <div className="flex h-[13px] py-[2px] border-t border-[#dddfde]">
              <div className="flex-[234]" />
              <div className="flex-[583] rounded-full bg-[#bfbfbf]" />
              <div className="flex-[257]" />
            </div>
            <Palette />
          </section>
          <PanelRail />
        </main>
        <StatusBar />
      </div>
    </div>
  );
}
